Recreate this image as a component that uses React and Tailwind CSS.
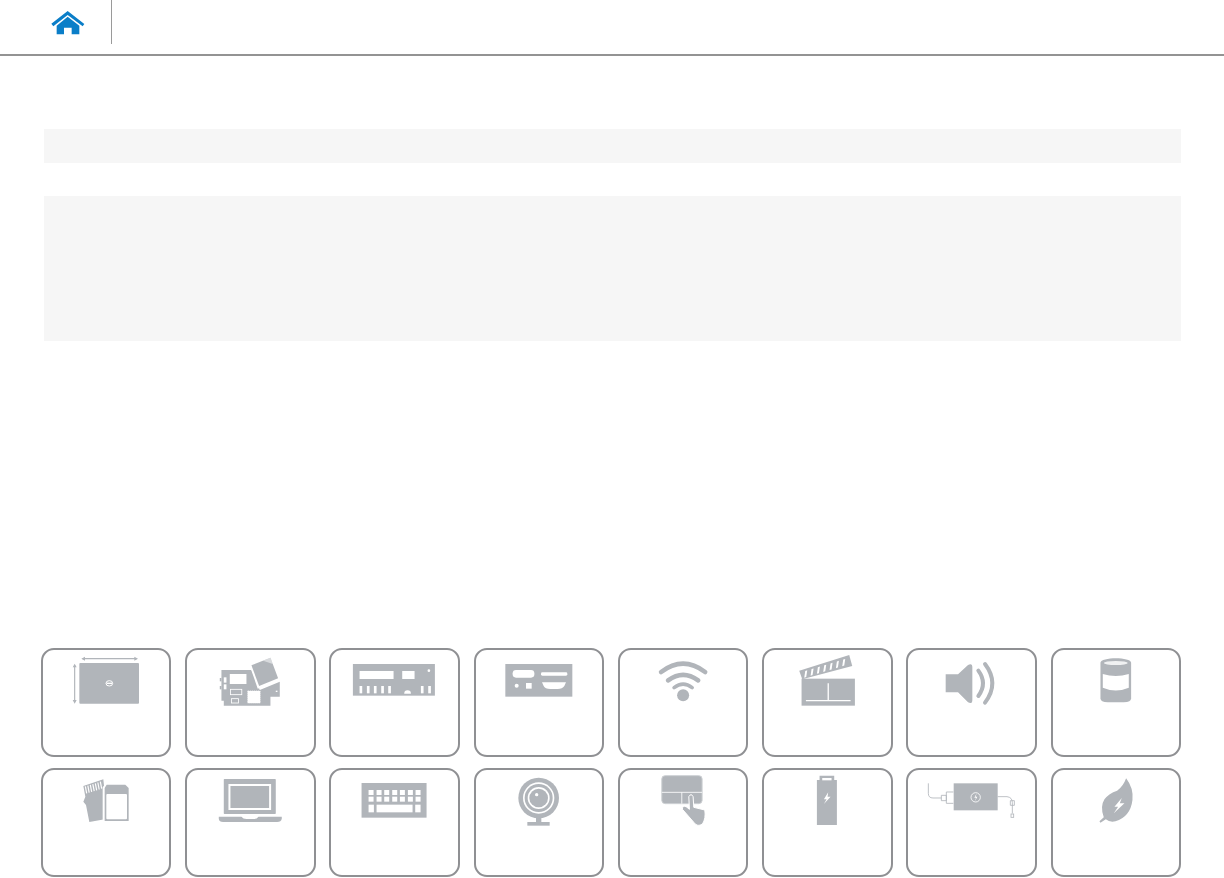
const G = "#b1b5ba";
const Z = ({ ox, oy, children }) => (
  <g transform={`translate(${ox} ${oy}) scale(0.33333)`}>{children}</g>
);

const Display = () => (
  <Z ox={30} oy={640}>
    <rect x="148" y="69" width="179" height="122" rx="3" fill={G} />
    <ellipse cx="238" cy="130" rx="10" ry="8" fill="none" stroke="#fff" strokeWidth="3" />
    <rect x="230" y="128" width="16" height="4" fill="#fff" />
    <path d="M158 56H320" stroke={G} strokeWidth="3.5" fill="none" />
    <path d="M165 50L154 56L165 62ZM313 50L324 56L313 62Z" fill={G} />
    <path d="M134 76V186" stroke={G} strokeWidth="3.5" fill="none" />
    <path d="M128 82L134 71L140 82ZM128 180L134 191L140 180Z" fill={G} />
  </Z>
);

const Board = () => (
  <Z ox={30} oy={640}>
    <path d="M575 90H665L690 150L750 125V170H722V197H582V182H575Z" fill={G} />
    <path d="M658 72L728 43L755 118L684 146Z" fill="#fff" />
    <path d="M665 76L722 53L745 115L688 138Z" fill={G} />
    <path d="M700 62L722 53L729 72Z" fill="#fff" opacity="0.5" />
    <rect x="600" y="102" width="50" height="30" fill="#fff" />
    <rect x="602" y="148" width="34" height="16" fill="none" stroke="#fff" strokeWidth="2.5" />
    <rect x="605" y="176" width="21" height="13" fill="none" stroke="#fff" strokeWidth="2.5" />
    <rect x="654" y="153" width="37" height="36" fill="#fff" stroke="#fff" strokeWidth="3" strokeDasharray="3 3" />
    <rect x="582" y="112" width="8" height="16" fill="#fff" />
    <rect x="582" y="133" width="8" height="15" fill="#fff" />
    <rect x="570" y="114" width="5" height="10" fill={G} />
    <rect x="570" y="138" width="5" height="10" fill={G} />
    <rect x="738" y="152" width="5" height="4" fill="#fff" />
    <rect x="575" y="184" width="5" height="13" fill="#fff" />
  </Z>
);

const PanelA = () => (
  <Z ox={320} oy={640}>
    <rect x="100" y="72" width="246" height="95" fill={G} />
    <rect x="120" y="93" width="102" height="24" fill="#fff" />
    <rect x="248" y="93" width="37" height="24" fill="#fff" />
    <circle cx="328" cy="92" r="4" fill="#fff" />
    {[120, 142, 163, 185, 206, 304, 326].map((x) => (
      <rect key={x} x={x} y="138" width="8" height="22" fill="#fff" />
    ))}
    <path d="M254 161A10 10 0 0 1 274 161Z" fill="#fff" />
  </Z>
);

const PanelB = () => (
  <Z ox={320} oy={640}>
    <rect x="555" y="72" width="201" height="98" fill={G} />
    <rect x="577" y="90" width="65" height="23" rx="10" fill="#fff" />
    <rect x="662" y="97" width="79" height="10" rx="4" fill="#fff" />
    <circle cx="589" cy="137" r="6" fill="#fff" />
    <rect x="617" y="129" width="17" height="17" fill="#fff" />
    <path d="M665 127H737L732 138Q726 147 712 147H690Q674 147 670 138Z" fill="#fff" />
  </Z>
);

const Wifi = () => (
  <Z ox={610} oy={640}>
    <g fill="none" stroke={G} strokeWidth="14" strokeLinecap="round">
      <path d="M153 96Q219 46 285 96" />
      <path d="M174 121Q219 88 264 121" />
    </g>
    <path d="M192 143Q219 122 246 143" fill="none" stroke={G} strokeWidth="11" strokeLinecap="round" />
    <circle cx="219" cy="166" r="18" fill={G} />
  </Z>
);

const Clapper = () => (
  <Z ox={610} oy={640}>
    <rect x="575" y="116" width="160" height="81" fill={G} />
    <path d="M588 182H722M655 130V182" stroke="#fff" strokeWidth="4" fill="none" />
    <path d="M568 92L718 45L727 78L577 118Z" fill={G} />
    {[0, 1, 2, 3, 4, 5, 6].map((i) => (
      <path
        key={i}
        d={`M${586 + i * 19} ${93 - i * 5.7}L${592 + i * 19} ${91 - i * 5.7}L${589 + i * 19} ${111 - i * 5.7}L${583 + i * 19} ${113 - i * 5.7}Z`}
        fill="#fff"
      />
    ))}
  </Z>
);

const Speaker = () => (
  <Z ox={900} oy={640}>
    <path d="M138 103H175L205 75Q218 68 218 82V180Q218 194 205 187L175 157H138Z" fill={G} />
    <g fill="none" stroke={G} strokeWidth="12" strokeLinecap="round">
      <path d="M236 92Q264 130 236 168" />
      <path d="M256 72Q300 130 256 188" />
    </g>
  </Z>
);

const Can = () => (
  <Z ox={900} oy={640}>
    <path d="M600 68C600 50 692 50 692 68V175Q692 187 670 187H622Q600 187 600 175Z" fill={G} />
    <ellipse cx="646" cy="69" rx="36" ry="6" fill="#f0f1f2" />
    <path d="M607 102Q646 114 685 102V143Q646 160 607 143Z" fill="#fff" />
  </Z>
);

const Cards = () => (
  <Z ox={30} oy={760}>
    <path d="M160 78L220 58L224 95V178L178 186L168 135L160 125L166 110Z" fill={G} />
    {[0, 1, 2, 3, 4, 5, 6].map((i) => (
      <path key={i} d={`M${166 + i * 7.5} ${79 - i * 2.3}L${170 + i * 7.5} ${100 - i * 2.3}`} stroke="#fff" strokeWidth="3.5" fill="none" />
    ))}
    <path d="M218 82L226 72H288L298 82V183H222L218 178Z" fill="#fff" />
    <path d="M224 84L230 74H286L296 84V183H224Z" fill={G} />
    <rect x="229" y="102" width="62" height="76" rx="3" fill="#fff" />
  </Z>
);

const Laptop = () => (
  <Z ox={30} oy={760}>
    <rect x="582" y="57" width="156" height="105" rx="2" fill={G} />
    <rect x="596" y="72" width="128" height="78" fill="#fff" />
    <rect x="602" y="78" width="116" height="66" fill={G} />
    <path d="M567 170H635Q640 177 650 177H672Q682 177 686 170H756V176Q754 186 742 186H580Q568 186 567 176Z" fill={G} />
  </Z>
);

const Keyboard = () => (
  <Z ox={320} oy={760}>
    <rect x="126" y="69" width="195" height="104" fill={G} />
    {[90, 110].map((y) =>
      [147, 171, 194, 218, 241, 265, 288].map((x) => (
        <rect key={`${x}-${y}`} x={x} y={y} width="15" height="15" fill="#fff" />
      ))
    )}
    <rect x="147" y="134" width="16" height="23" fill="#fff" />
    <rect x="171" y="134" width="108" height="23" fill="#fff" />
    <rect x="287" y="134" width="16" height="23" fill="#fff" />
  </Z>
);

const Webcam = () => (
  <Z ox={320} oy={760}>
    <rect x="647" y="170" width="16" height="20" fill={G} />
    <rect x="621" y="186" width="67" height="11" fill={G} />
    <circle cx="655" cy="114" r="61" fill={G} />
    <circle cx="655" cy="114" r="47" fill="#fff" />
    <circle cx="655" cy="114" r="42" fill={G} />
    <circle cx="655" cy="114" r="33" fill="#fff" />
    <circle cx="655" cy="114" r="28" fill={G} />
    <circle cx="649" cy="104" r="5" fill="#fff" />
  </Z>
);

const Pad = () => (
  <Z ox={610} oy={760}>
    <rect x="155" y="47" width="121" height="84" rx="10" fill={G} stroke="#ced1d4" strokeWidth="3" />
    <path d="M155 97H276M215 97V131" stroke="#fff" strokeWidth="2.5" fill="none" />
    <path
      d="M236 110Q243 98 249 110L251 142L284 150Q288 175 277 192Q262 202 252 188L217 148Q216 136 228 140L238 148Z"
      fill={G}
      stroke="#fff"
      strokeWidth="3"
    />
  </Z>
);

const Battery = () => (
  <Z ox={610} oy={760}>
    <path d="M629 47H673V60H681V195H621V60H629Z" fill={G} />
    <rect x="637" y="54" width="28" height="7" fill="#fff" />
    <path d="M655 97L642 118H650L642 132L662 110H653Z" fill="#fff" />
  </Z>
);

const Adapter = () => (
  <Z ox={900} oy={760}>
    <rect x="162" y="70" width="132" height="81" fill={G} />
    <circle cx="228" cy="112" r="14" fill="none" stroke="#fff" strokeWidth="2.5" />
    <path d="M231 100L224 113H229L226 124L233 110H228Z" fill="#fff" />
    <g fill="none" stroke={G} strokeWidth="2.5">
      <path d="M86 70V100Q86 114 100 114H125" />
      <path d="M125 106H140V122H125Z" />
      <path d="M140 96L161 96M140 130L161 130M140 96V130" />
      <path d="M294 110H322Q338 112 338 128V160" />
      <path d="M332 122H344V136H332Z" />
      <rect x="334" y="162" width="8" height="10" />
    </g>
  </Z>
);

const Leaf = () => (
  <Z ox={900} oy={760}>
    <path
      d="M677 55Q700 85 696 120Q690 170 645 184Q628 188 616 178L600 188L597 184L610 172Q598 140 612 118Q625 100 650 92Q668 80 677 55Z"
      fill={G}
    />
    <path d="M664 114L642 140H653L640 160L672 130H658Z" fill="#fff" />
  </Z>
);

const row1 = [Display, Board, PanelA, PanelB, Wifi, Clapper, Speaker, Can];
const row2 = [Cards, Laptop, Keyboard, Webcam, Pad, Battery, Adapter, Leaf];

const Card = ({ Icon, col, top }) => {
  const x = 43 + 144.22 * col;
  return (
    <div className="h-[109px] rounded-[13px] border-2 border-[#8f9093] bg-white overflow-hidden">
      <svg
        className="block w-full h-full"
        viewBox={`${x} ${top + 2} 126.47 105`}
        preserveAspectRatio="xMinYMin meet"
      >
        <Icon />
      </svg>
    </div>
  );
};

export default function App() {
  return (
    <div className="w-[1224px] h-[878px] bg-white overflow-hidden">
      <header className="h-[56px] border-b-2 border-[#939393] flex items-start pl-[51px]">
        <svg className="mt-[11px] w-[34px] h-[24px]" viewBox="153 33 102 72">
          <path d="M203 33L253 72L248 79L203 45L160 79L154 71Z" fill="#0a7ec8" />
          <path d="M170 77L203 50L238 77V103H215V83H192V103H170Z" fill="#0a7ec8" />
        </svg>
        <div className="ml-[26px] w-px h-[44px] bg-[#9a9a9a]" />
      </header>
      <div className="mt-[73px] ml-[44px] mr-[43px] h-[34px] bg-[#f6f6f6]" />
      <div className="mt-[33px] ml-[44px] mr-[43px] h-[145px] bg-[#f6f6f6]" />
      <div className="mt-[307px] pl-[41px] pr-[43px] grid grid-cols-8 gap-x-[13.75px] gap-y-[11px]">
        {row1.map((Icon, i) => (
          <Card key={i} Icon={Icon} col={i} top={648} />
        ))}
        {row2.map((Icon, i) => (
          <Card key={i} Icon={Icon} col={i} top={768} />
        ))}
      </div>
    </div>
  );
}
